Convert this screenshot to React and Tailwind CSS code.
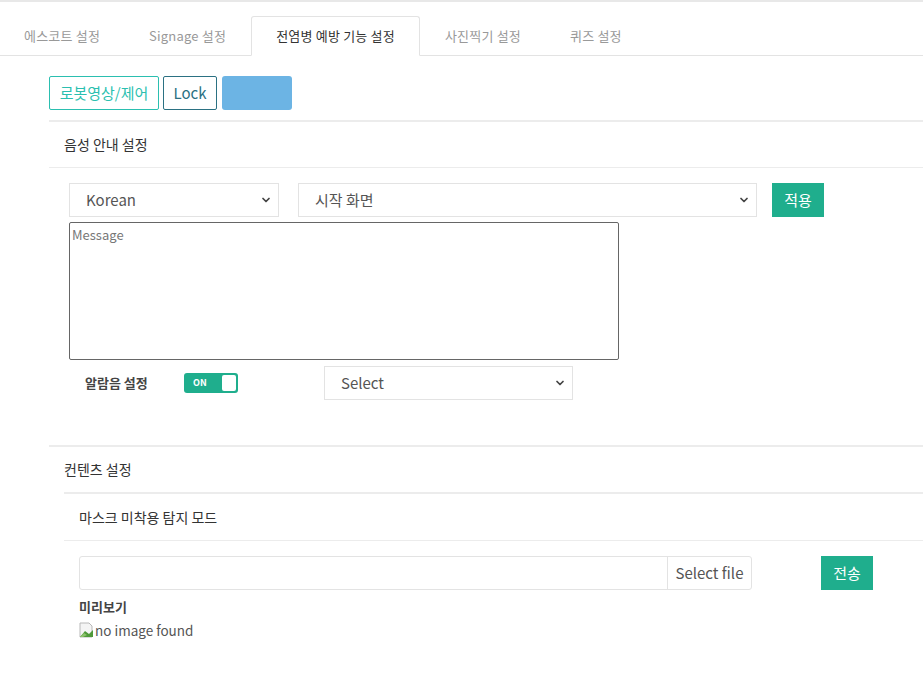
import { ChevronDown } from "lucide-react";

const font = { fontFamily: "'Noto Sans CJK KR', 'Noto Sans', sans-serif" };

function Select({ value, className }) {
  return (
    <div
      className={`h-[34px] border border-[#e3e3e3] bg-white flex items-center justify-between pl-4 pr-[6px] text-[15px] text-[#555] ${className}`}
    >
      <span>{value}</span>
      <ChevronDown className="w-3 h-3 text-[#444]" strokeWidth={3.5} />
    </div>
  );
}

function BrokenImage() {
  return (
    <svg width="16" height="16" viewBox="0 0 16 16" className="inline-block">
      <path d="M1 1h9l3 3v11H1z" fill="#f4f4f4" stroke="#b8b8b8" />
      <path d="M1 15l5-6 4 3 4-4v7z" fill="#4f9a3a" />
      <path d="M1 15l4-4 3 2-4 2z" fill="#8cc26b" />
    </svg>
  );
}

export default function App() {
  const tabs = ["에스코트 설정", "Signage 설정", "전염병 예방 기능 설정", "사진찍기 설정", "퀴즈 설정"];
  return (
    <div className="w-[923px] h-[696px] bg-white border-t-2 border-[#e8e8e8] text-[#333]" style={font}>
      {/* Tabs */}
      <div className="flex items-end gap-[1px] pt-[14px] border-b border-[#e3e3e3]">
        {tabs.map((t, i) =>
          i === 2 ? (
            <div
              key={t}
              className="h-[40px] px-6 flex items-center border border-[#e3e3e3] border-b-white -mb-px rounded-t-[3px] bg-white text-[13px] tracking-[0.2px] text-[#333]"
            >
              {t}
            </div>
          ) : (
            <div key={t} className="h-[39px] px-6 flex items-center text-[13px] tracking-[0.2px] text-[#999]">
              {t}
            </div>
          )
        )}
      </div>

      <div className="pl-[49px]">
        {/* Action buttons */}
        <div className="flex gap-1 pt-5 pb-[10px]">
          <div className="h-[34px] w-[110px] border border-[#2bbfb0] rounded-[2px] flex items-center justify-center text-[15px] text-[#2bbfb0]">
            로봇영상/제어
          </div>
          <div className="h-[34px] w-[54px] border border-[#2b7183] rounded-[2px] flex items-center justify-center text-[15px] text-[#2b7183]">
            Lock
          </div>
          <div className="h-[34px] w-[70px] bg-[#6cb4e4] rounded-[3px] ml-[1px]" />
        </div>

        {/* Voice guide */}
        <div className="border-t-2 border-[#ececec]">
          <div className="h-[46px] flex items-center pl-[15px] text-[14px] border-b border-[#ececec]">
            음성 안내 설정
          </div>
          <div className="pl-5 pt-[15px] pb-[45px] border-b-2 border-[#ececec]">
            <div className="flex items-center">
              <Select value="Korean" className="w-[210px]" />
              <Select value="시작 화면" className="w-[459px] ml-[19px]" />
              <div className="ml-[15px] h-[34px] w-[52px] bg-[#1fae8d] text-white text-[15px] flex items-center justify-center">
                적용
              </div>
            </div>
            <div className="mt-[5px] w-[550px] h-[138px] border border-[#666] rounded-[2px] px-[2px] pt-[2px] text-[13px] text-[#777] leading-[20px]">
              Message
            </div>
            <div className="flex items-center mt-[6px]">
              <div className="w-[115px] pl-4 text-[13px] font-bold text-[#444]">알람음 설정</div>
              <div className="w-[54px] h-[20px] bg-[#1fae8d] rounded-[3px] flex items-center justify-between pl-[9px] pr-[2px]">
                <span className="text-[9px] font-bold text-white">ON</span>
                <span className="w-[14px] h-[16px] bg-white rounded-[2px]" />
              </div>
              <Select value="Select" className="w-[249px] ml-[86px]" />
            </div>
          </div>

          {/* Contents */}
          <div className="h-[45px] flex items-center pl-[15px] text-[14px]">컨텐츠 설정</div>
          <div className="ml-[15px] border-t-2 border-[#ececec]">
            <div className="h-[47px] flex items-center pl-[15px] text-[14px] border-b border-[#ececec]">
              마스크 미착용 탐지 모드
            </div>
            <div className="pl-[15px] pt-[15px]">
              <div className="flex items-center">
                <div className="w-[673px] h-[34px] border border-[#e3e3e3] rounded-[3px] flex justify-end">
                  <div className="w-[84px] border-l border-[#e3e3e3] flex items-center justify-center text-[15px] text-[#555]">
                    Select file
                  </div>
                </div>
                <div className="ml-[69px] h-[34px] w-[52px] bg-[#1fae8d] text-white text-[15px] flex items-center justify-center">
                  전송
                </div>
              </div>
              <div className="mt-[7px] text-[13px] font-bold text-[#444]">미리보기</div>
              <div className="mt-[3px] flex items-center text-[13.5px] text-[#555]">
                <BrokenImage />
                <span>no image found</span>
              </div>
            </div>
          </div>
        </div>
      </div>
    </div>
  );
}
